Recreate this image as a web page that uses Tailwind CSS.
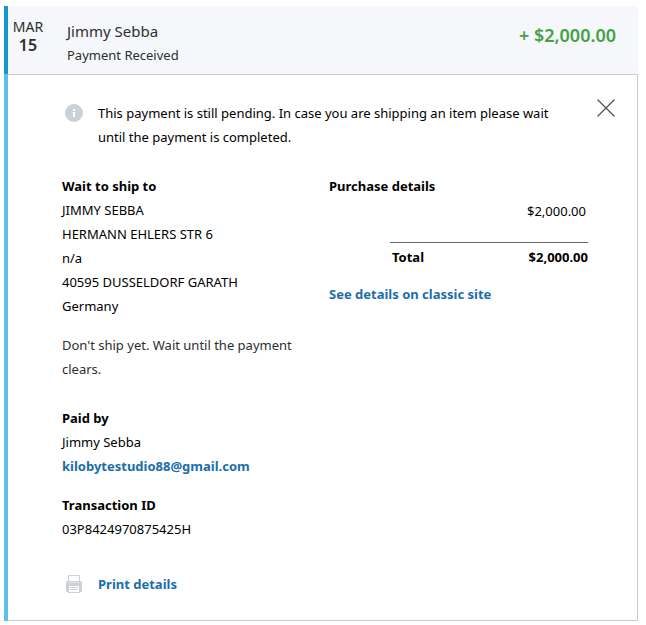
<!DOCTYPE html>
<html lang="en">

<head>
    <meta charset="UTF-8" />
    <meta name="viewport" content="width=device-width, initial-scale=1.0" />
    <title>Payment Received</title>
    <script src="https://cdn.jsdelivr.net/npm/@tailwindcss/browser@4"></script>
</head>

<body class="bg-white font-['Noto_Sans',sans-serif] text-[13px] leading-6 text-black">

    <main class="mt-1.5 ml-1 mr-2">
        <!-- Summary row -->
        <header class="flex h-17 border-l-4 border-[#1797d0] bg-[#f5f7fa] text-[#2c2e2f]">
            <time datetime="03-15" class="w-10 pt-[11px] text-center">
                <span class="block text-sm leading-5">MAR</span>
                <span class="block text-base leading-4 font-semibold">15</span>
            </time>
            <div class="ml-[19px] flex-1 pt-[13px]">
                <h1 class="text-[15px] leading-6">Jimmy Sebba</h1>
                <p>Payment Received</p>
            </div>
            <p class="pt-[17px] pr-5.5 text-lg leading-6 font-semibold text-[#46a146]">+ $2,000.00</p>
        </header>

        <!-- Expanded details -->
        <section class="border-l-4 border-l-[#5bc0eb]">
            <div class="border border-l-0 border-[#c9cbcf] pt-6.5 pr-[21px] pb-6 pl-13.5">
                <div class="flex items-start">
                    <svg class="mt-[3px] ml-[3px] size-4.5 shrink-0" viewBox="0 0 18 18" aria-hidden="true">
                        <circle cx="9" cy="9" r="9" fill="#cbd2d6" />
                        <path d="M8 5h2v2H8zM7.5 8H10v5H8V9h-.5z" fill="#fff" />
                    </svg>
                    <p class="ml-[15px] flex-1">This payment is still pending. In case you are shipping an item please wait until the payment is completed.</p>
                    <button type="button" aria-label="Close" class="-mt-[3px] ml-8 shrink-0 cursor-pointer p-0">
                        <svg class="size-5" viewBox="0 0 20 20" fill="none" stroke="#4f5256" stroke-width="1.2">
                            <path d="M1.5 1.5l17 17M18.5 1.5l-17 17" />
                        </svg>
                    </button>
                </div>

                <div class="mt-[25px] flex">
                    <div class="w-61 shrink-0">
                        <h2 class="font-bold">Wait to ship to</h2>
                        <address class="not-italic">
                            JIMMY SEBBA<br />
                            HERMANN EHLERS STR 6<br />
                            n/a<br />
                            40595 DUSSELDORF GARATH<br />
                            Germany
                        </address>
                        <p class="mt-[15px] text-[#2c2e2f]">Don't ship yet. Wait until the payment clears.</p>

                        <h2 class="mt-[25px] font-bold">Paid by</h2>
                        <p>Jimmy Sebba</p>
                        <a href="mailto:kilobytestudio88@gmail.com" class="block font-bold text-[#1a6eaa]">kilobytestudio88@gmail.com</a>

                        <h2 class="mt-[15px] font-bold">Transaction ID</h2>
                        <p>03P8424970875425H</p>
                    </div>

                    <div class="ml-[23px] flex-1 pr-7">
                        <h2 class="font-bold">Purchase details</h2>
                        <table class="w-full">
                            <tbody>
                                <tr>
                                    <td class="w-[61px]"></td>
                                    <td class="h-11"></td>
                                    <td class="pt-px pr-0.5 text-right align-top">$2,000.00</td>
                                </tr>
                                <tr class="font-bold">
                                    <td></td>
                                    <th scope="row" class="border-t border-[#666] pt-0.5 pl-0.5 text-left">Total</th>
                                    <td class="border-t border-[#666] pt-0.5 text-right">$2,000.00</td>
                                </tr>
                            </tbody>
                        </table>
                        <a href="#" class="mt-[13px] block font-bold text-[#1a6eaa]">See details on classic site</a>
                    </div>
                </div>

                <a href="#" class="mt-[31px] flex items-center font-bold text-[#1a6eaa]">
                    <svg class="ml-[3px] size-4.5" viewBox="0 0 18 18" aria-hidden="true">
                        <path d="M3.5 6V.5h11V6" fill="#fff" stroke="#cbd2d6" />
                        <rect x="1" y="6" width="16" height="11" rx="1.5" fill="#cbd2d6" />
                        <path d="M3 7.5h12" stroke="#dfe4e6" />
                        <path d="M4 11h10v6H4z" fill="#fff" />
                        <path d="M5 12.5h8M5 14.5h8M3 17.5h12" stroke="#cbd2d6" />
                    </svg>
                    <span class="ml-[15px]">Print details</span>
                </a>
            </div>
        </section>
    </main>

</body>

</html>
